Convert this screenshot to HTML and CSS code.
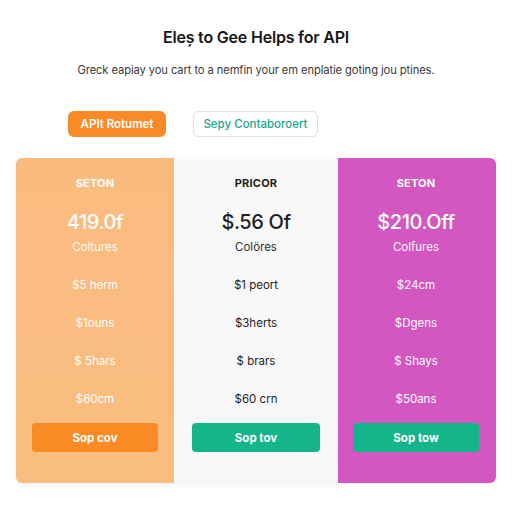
FILE: index.html
```html
<!DOCTYPE html>
<html>
<head>
<meta charset="utf-8">
<link rel="stylesheet" href="styles.css">
</head>
<body>
<div class="page">
  <h1 class="title">Eleș to Gee Helps for API</h1>
  <p class="subtitle">Greck eapiay you cart to a nemfin your em enplatie goting jou ptines.</p>
  <div class="actions">
    <button class="btn btn-primary">APIt Rotumet</button>
    <button class="btn btn-outline">Sepy Contaboroert</button>
  </div>
  <div class="plans">
    <div class="plan plan-orange">
      <div class="plan-label">SETON</div>
      <div class="plan-price">419.0f</div>
      <div class="plan-sub">Coltures</div>
      <div class="plan-feat">$5 herm</div>
      <div class="plan-feat">$1ouns</div>
      <div class="plan-feat">$ 5hars</div>
      <div class="plan-feat">$60cm</div>
      <button class="plan-btn btn-orange">Sop cov</button>
    </div>
    <div class="plan plan-light">
      <div class="plan-label">PRICOR</div>
      <div class="plan-price">$.56 Of</div>
      <div class="plan-sub">Colöres</div>
      <div class="plan-feat">$1 peort</div>
      <div class="plan-feat">$3herts</div>
      <div class="plan-feat">$ brars</div>
      <div class="plan-feat">$60 crn</div>
      <button class="plan-btn btn-teal">Sop tov</button>
    </div>
    <div class="plan plan-magenta">
      <div class="plan-label">SETON</div>
      <div class="plan-price">$210.Off</div>
      <div class="plan-sub">Colfures</div>
      <div class="plan-feat">$24cm</div>
      <div class="plan-feat">$Dgens</div>
      <div class="plan-feat">$ Shays</div>
      <div class="plan-feat">$50ans</div>
      <button class="plan-btn btn-teal">Sop tow</button>
    </div>
  </div>
</div>
</body>
</html>
```

FILE: styles.css
```css
* { box-sizing: border-box; }
html, body { margin: 0; padding: 0; background: #ffffff; }
body { font-family: Inter, "Noto Sans", "Liberation Sans", sans-serif; color: #1d1d1f; }
.page { width: 512px; height: 512px; padding-top: 26px; display: flex; flex-direction: column; align-items: center; }
.title { margin: 0; font-size: 16px; line-height: 22px; font-weight: 600; letter-spacing: -0.2px; color: #161616; }
.subtitle { margin: 13px 0 0; font-size: 11.2px; line-height: 18px; color: #3a3a3a; letter-spacing: -0.1px; }
.actions { margin-top: 32px; display: flex; gap: 27px; width: 480px; padding-left: 52px; }
.btn { height: 26px; border-radius: 6px; font-family: inherit; font-size: 11.5px; font-weight: 600; padding: 0; }
.btn-primary { width: 98px; background: #f98b27; color: #ffffff; border: none; }
.btn-outline { width: 125px; background: #ffffff; color: #1aa98b; border: 1px solid #dedede; font-weight: 500; }
.plans { margin-top: 21px; display: grid; grid-template-columns: 158px 164px 158px; width: 480px; height: 325px; border-radius: 6px; overflow: hidden; box-shadow: 0 2px 8px rgba(0,0,0,0.05); }
.plan { display: flex; flex-direction: column; align-items: center; padding: 18px 16px 32px; text-align: center; }
.plan-orange { background: linear-gradient(180deg, #fabb7f 0%, #f9bd80 100%); color: #ffffff; }
.plan-light { background: #f8f8f8; color: #1f1f1f; padding-left: 18px; padding-right: 18px; }
.plan-magenta { background: #d357c1; color: #ffffff; padding-left: 15px; padding-right: 17px; }
.plan-label { font-size: 11px; line-height: 14px; font-weight: 700; letter-spacing: 0.2px; }
.plan-price { margin-top: 20px; font-size: 20px; line-height: 24px; font-weight: 500; letter-spacing: -0.4px; }
.plan-sub { margin-top: 5px; font-size: 11.5px; line-height: 16px; opacity: 0.95; }
.plan-feat { margin-top: 22px; font-size: 11.5px; line-height: 16px; }
.plan-btn { margin-top: 16px; width: 100%; height: 29px; border: none; border-radius: 4px; color: #ffffff; font-family: inherit; font-size: 11.5px; font-weight: 700; }
.btn-orange { background: #f98a24; }
.btn-teal { background: #14b58a; }
```
